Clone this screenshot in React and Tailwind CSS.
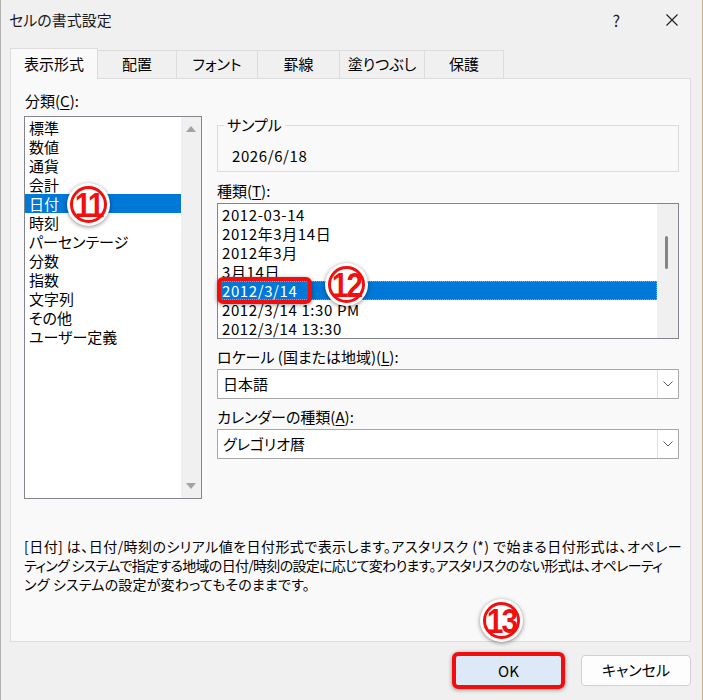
import React from "react";

const categories = [
  "標準",
  "数値",
  "通貨",
  "会計",
  "日付",
  "時刻",
  "パーセンテージ",
  "分数",
  "指数",
  "文字列",
  "その他",
  "ユーザー定義",
];

const types = [
  "2012-03-14",
  "2012年3月14日",
  "2012年3月",
  "3月14日",
  "2012/3/14",
  "2012/3/14 1:30 PM",
  "2012/3/14 13:30",
];

const tabs = [
  { label: "配置", w: "w-[79px]" },
  { label: "フォント", w: "w-[81px]" },
  { label: "罫線", w: "w-[82px]" },
  { label: "塗りつぶし", w: "w-[85px]" },
  { label: "保護", w: "w-[79px]" },
];

function Badge({ label, className }) {
  return (
    <div
      className={`absolute flex items-center justify-center rounded-full bg-white shadow-[0_1px_4px_rgba(0,0,0,0.45)] ${className}`}
    >
      <div className="flex h-[37px] w-[37px] items-center justify-center rounded-full border-[3px] border-[#f01010]">
        <span className="inline-block scale-y-[1.18] font-['Liberation_Sans_Narrow','Liberation_Sans',sans-serif] text-[30px] font-bold leading-none tracking-[-2px] text-[#f01010]">
          {label}
        </span>
      </div>
    </div>
  );
}

function Chevron() {
  return (
    <svg width="10" height="6" viewBox="0 0 10 6" fill="none">
      <path d="M0.5 0.5 L5 5 L9.5 0.5" stroke="#5f5f5f" strokeWidth="1" />
    </svg>
  );
}

function Dropdown({ value }) {
  return (
    <div className="flex h-[30px] items-stretch border border-[#a7a7a7] bg-white">
      <div className="flex flex-1 items-center pl-[5px] text-[15px]">{value}</div>
      <div className="flex w-[21px] items-center justify-center border-l border-[#dedede]">
        <Chevron />
      </div>
    </div>
  );
}

export default function App() {
  return (
    <div className="relative flex h-[700px] w-[703px] flex-col overflow-hidden bg-[#f0f0f0] text-black shadow-[inset_1px_0_0_#b0b0b0,inset_-1px_0_0_#c4b48c] font-['Noto_Sans_CJK_JP','Noto_Sans',sans-serif] [font-feature-settings:'palt']">
      {/* Title bar */}
      <div className="flex h-[40px] items-center pl-[9px]">
        <span className="text-[15px] text-[#1b1b1b]">セルの書式設定</span>
        <span className="ml-auto text-[16px] text-[#1b1b1b]">?</span>
        <svg className="ml-[46px] mr-[25px]" width="12" height="12" viewBox="0 0 12 12">
          <path d="M0.5 0.5 L11.5 11.5 M11.5 0.5 L0.5 11.5" stroke="#1b1b1b" strokeWidth="1.1" />
        </svg>
      </div>

      {/* Tabs */}
      <div className="mt-[8px] flex h-[30px] items-end pl-[10px]">
        <div className="relative z-10 -mb-px flex h-[31px] w-[88px] items-center justify-center border border-b-0 border-[#dcdcdc] bg-[#f9f9f9] text-[15px]">
          表示形式
        </div>
        {tabs.map((t) => (
          <div
            key={t.label}
            className={`flex h-[28px] items-center justify-center border-r border-t border-[#dcdcdc] text-[15px] ${t.w}`}
          >
            {t.label}
          </div>
        ))}
      </div>

      {/* Panel */}
      <div className="ml-[10px] flex h-[564px] w-[681px] flex-col border border-[#dcdcdc] bg-[#f9f9f9]">
        <div className="flex pl-[13px] pt-[12px]">
          {/* Category */}
          <div className="flex flex-col">
            <div className="h-[19px] pl-[1px] text-[15px] leading-[19px]">
              分類(<span className="underline underline-offset-2">C</span>):
            </div>
            <div className="mt-[6px] flex h-[383px] w-[178px] border border-[#82858c] bg-white">
              <div className="flex-1 pt-[1px]">
                {categories.map((c) => (
                  <div
                    key={c}
                    className={`h-[19px] pl-[4px] text-[15px] leading-[19px] ${
                      c === "日付" ? "bg-[#0078d7] text-white" : ""
                    }`}
                  >
                    {c}
                  </div>
                ))}
              </div>
              <div className="flex w-[20px] flex-col items-center justify-between bg-[#f0f0f0] py-[9px]">
                <svg width="10" height="6" viewBox="0 0 10 6">
                  <path d="M0 6 L5 0 L10 6 Z" fill="#a3a3a3" />
                </svg>
                <svg width="10" height="6" viewBox="0 0 10 6">
                  <path d="M0 0 L10 0 L5 6 Z" fill="#a3a3a3" />
                </svg>
              </div>
            </div>
          </div>

          {/* Right side */}
          <div className="ml-[15px] flex w-[462px] flex-col">
            <fieldset className="mt-[27px] h-[54px] border border-[#dcdcdc]">
              <legend className="ml-[6px] px-[3px] text-[15px] leading-[14px]">サンプル</legend>
              <div className="pl-[14px] pt-[14px] text-[15px] leading-[19px] tracking-[0.6px]">2026/6/18</div>
            </fieldset>

            <div className="mt-[9px] h-[19px] text-[15px] leading-[19px]">
              種類(<span className="underline underline-offset-2">T</span>):
            </div>
            <div className="mt-[3px] flex h-[136px] border border-[#82858c] bg-white">
              <div className="flex-1 pt-[1px]">
                {types.map((t) => (
                  <div
                    key={t}
                    className={`h-[19px] whitespace-nowrap pl-[4px] text-[15px] leading-[19px] tracking-[0.6px] ${
                      t === "2012/3/14"
                        ? "bg-[#0078d7] text-white outline-1 -outline-offset-1 outline-dotted outline-[#c9965a]"
                        : ""
                    }`}
                  >
                    {t}
                  </div>
                ))}
              </div>
              <div className="w-[21px] bg-[#f0f0f0] pt-[32px]">
                <div className="ml-[8px] h-[33px] w-[3px] rounded-full bg-[#858585]" />
              </div>
            </div>

            <div className="mt-[8px] h-[19px] text-[15px] leading-[19px]">
              ロケール (国または地域)(<span className="underline underline-offset-2">L</span>):
            </div>
            <div className="mt-[3px]">
              <Dropdown value="日本語" />
            </div>

            <div className="mt-[8px] h-[19px] text-[15px] leading-[19px]">
              カレンダーの種類(<span className="underline underline-offset-2">A</span>):
            </div>
            <div className="mt-[3px]">
              <Dropdown value="グレゴリオ暦" />
            </div>
          </div>
        </div>

        {/* Description */}
        <div className="mt-[38px] pl-[13px] text-[14px] leading-[19px]">
          <div className="whitespace-nowrap tracking-[0.45px]">
            [日付] は、日付/時刻のシリアル値を日付形式で表示します。アスタリスク (*) で始まる日付形式は、オペレー
          </div>
          <div className="whitespace-nowrap tracking-[-0.7px]">
            ティング システムで指定する地域の日付/時刻の設定に応じて変わります。アスタリスクのない形式は、オペレーティ
          </div>
          <div className="whitespace-nowrap tracking-[0.2px]">ング システムの設定が変わってもそのままです。</div>
        </div>
      </div>

      {/* Buttons */}
      <div className="mt-[13px] flex items-start justify-end gap-[19px] pr-[12px]">
        <button className="flex h-[32px] w-[107px] items-center justify-center rounded-[4px] border border-[#b9cfe6] bg-[#dde9f6] text-[15px]">
          OK
        </button>
        <button className="flex h-[31px] w-[110px] items-center justify-center rounded-[4px] border border-[#d0d0d0] bg-[#fdfdfd] text-[15px]">
          キャンセル
        </button>
      </div>

      {/* Annotations */}
      <div className="absolute left-[217px] top-[277px] h-[27px] w-[95px] rounded-[6px] border-[4px] border-[#f20c0c] shadow-[0_1px_4px_rgba(0,0,0,0.4)]" />
      <div className="absolute left-[452px] top-[652px] h-[37px] w-[113px] rounded-[6px] border-[4px] border-[#f20c0c] shadow-[0_1px_4px_rgba(0,0,0,0.4)]" />
      <Badge label="11" className="left-[67px] top-[183px] h-[43px] w-[43px]" />
      <Badge label="12" className="left-[325px] top-[263px] h-[43px] w-[43px]" />
      <Badge label="13" className="left-[480px] top-[599px] h-[43px] w-[43px]" />
    </div>
  );
}
